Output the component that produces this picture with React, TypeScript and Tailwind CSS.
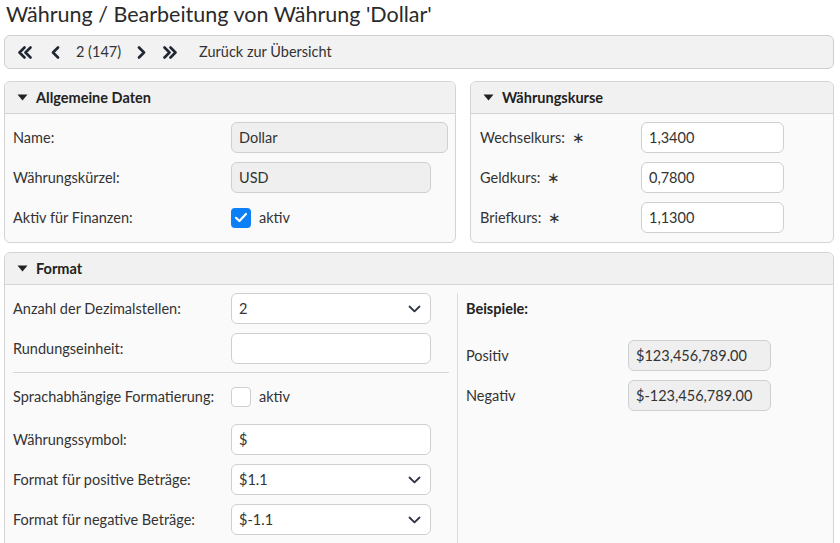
import React from "react";

const font = { fontFamily: "Lato, 'Noto Sans', sans-serif" };

function Caret() {
  return (
    <svg width="11" height="7" viewBox="0 0 11 7" className="shrink-0">
      <path d="M0.5 0.5 L10.5 0.5 L5.5 6.5 Z" fill="#222" />
    </svg>
  );
}

function Chevron({ dir }: { dir: "l" | "r" }) {
  return (
    <svg width="9" height="13" viewBox="0 0 9 13">
      <path
        d={dir === "l" ? "M7 1.5 L2 6.5 L7 11.5" : "M2 1.5 L7 6.5 L2 11.5"}
        stroke="#1f2733"
        strokeWidth="2.6"
        fill="none"
        strokeLinecap="round"
        strokeLinejoin="round"
      />
    </svg>
  );
}

function DoubleChevron({ dir }: { dir: "l" | "r" }) {
  return (
    <svg width="16" height="13" viewBox="0 0 16 13">
      <path
        d={
          dir === "l"
            ? "M7.5 1.5 L2.5 6.5 L7.5 11.5 M13.5 1.5 L8.5 6.5 L13.5 11.5"
            : "M2.5 1.5 L7.5 6.5 L2.5 11.5 M8.5 1.5 L13.5 6.5 L8.5 11.5"
        }
        stroke="#1f2733"
        strokeWidth="2.6"
        fill="none"
        strokeLinecap="round"
        strokeLinejoin="round"
      />
    </svg>
  );
}

function SelectChevron() {
  return (
    <svg width="13" height="8" viewBox="0 0 13 8">
      <path d="M1.5 1.5 L6.5 6.3 L11.5 1.5" stroke="#2a3340" strokeWidth="1.8" fill="none" strokeLinecap="round" strokeLinejoin="round" />
    </svg>
  );
}

function Field({ value, w, ro, select }: { value: string; w: string; ro?: boolean; select?: boolean }) {
  return (
    <div
      className={`${w} h-[31px] shrink-0 rounded-[6px] border border-[#cfcfcf] flex items-center justify-between pl-[7px] pr-[9px] text-[14.5px] text-[#333] ${
        ro ? "bg-[#efefef]" : "bg-white"
      }`}
    >
      <span>{value}</span>
      {select && <SelectChevron />}
    </div>
  );
}

function Check({ checked }: { checked?: boolean }) {
  return checked ? (
    <div className="w-[20px] h-[20px] rounded-[4px] bg-[#0b7ff5] flex items-center justify-center">
      <svg width="14" height="11" viewBox="0 0 14 11">
        <path d="M2 5.8 L5.4 9 L12 2" stroke="white" strokeWidth="2.2" fill="none" strokeLinecap="round" strokeLinejoin="round" />
      </svg>
    </div>
  ) : (
    <div className="w-[20px] h-[20px] rounded-[4px] bg-white border border-[#cfcfcf]" />
  );
}

function PanelHeader({ title }: { title: string }) {
  return (
    <div className="h-[32px] bg-[#f1f1f1] border-b border-[#d4d4d4] flex items-center gap-[8px] pl-[12px] rounded-t-[6px]">
      <Caret />
      <span className="font-bold text-[14.5px] text-[#222]">{title}</span>
    </div>
  );
}

function Row({ label, children, lw }: { label: React.ReactNode; children: React.ReactNode; lw: string }) {
  return (
    <div className="flex items-center h-[31px]">
      <div className={`${lw} shrink-0 text-[14.5px] text-[#333]`}>{label}</div>
      {children}
    </div>
  );
}

function Req({ text }: { text: string }) {
  return (
    <span>
      {text}
      <span className="ml-[7px]">∗</span>
    </span>
  );
}

export default function App() {
  return (
    <div style={font} className="w-[840px] h-[543px] overflow-hidden bg-white text-[#333]">
      <div className="h-[29px] pl-[6px] text-[21.5px] leading-[28px] text-[#2a2a2a]">
        Währung / Bearbeitung von Währung 'Dollar'
      </div>
      <div className="mx-[4px] mt-[6px] w-[830px] h-[34px] rounded-[6px] border border-[#cfcfcf] bg-[#f2f2f2] flex items-center pl-[12px] text-[14.5px]">
        <DoubleChevron dir="l" />
        <div className="w-[18px]" />
        <Chevron dir="l" />
        <span className="ml-[16px]">2 (147)</span>
        <div className="w-[16px]" />
        <Chevron dir="r" />
        <div className="w-[16px]" />
        <DoubleChevron dir="r" />
        <span className="ml-[21px]">Zurück zur Übersicht</span>
      </div>

      <div className="flex gap-[14px] mx-[4px] mt-[12px]">
        <div className="w-[452px] h-[162px] rounded-[6px] border border-[#d4d4d4] bg-[#fafafa]">
          <PanelHeader title="Allgemeine Daten" />
          <div className="pl-[8px] pt-[8px] flex flex-col gap-[9px]">
            <Row label="Name:" lw="w-[218px]">
              <Field value="Dollar" w="w-[217px]" ro />
            </Row>
            <Row label="Währungskürzel:" lw="w-[218px]">
              <Field value="USD" w="w-[200px]" ro />
            </Row>
            <Row label="Aktiv für Finanzen:" lw="w-[218px]">
              <div className="flex items-center gap-[8px] text-[14.5px]">
                <Check checked />
                <span>aktiv</span>
              </div>
            </Row>
          </div>
        </div>
        <div className="w-[364px] h-[162px] rounded-[6px] border border-[#d4d4d4] bg-[#fafafa]">
          <PanelHeader title="Währungskurse" />
          <div className="pl-[9px] pt-[8px] flex flex-col gap-[9px]">
            <Row label={<Req text="Wechselkurs:" />} lw="w-[161px]">
              <Field value="1,3400" w="w-[143px]" />
            </Row>
            <Row label={<Req text="Geldkurs:" />} lw="w-[161px]">
              <Field value="0,7800" w="w-[143px]" />
            </Row>
            <Row label={<Req text="Briefkurs:" />} lw="w-[161px]">
              <Field value="1,1300" w="w-[143px]" />
            </Row>
          </div>
        </div>
      </div>

      <div className="mx-[4px] mt-[9px] w-[830px] h-[320px] rounded-[6px] border border-[#d4d4d4] bg-[#fafafa]">
        <PanelHeader title="Format" />
        <div className="flex">
          <div className="w-[452px] pl-[8px] pt-[8px] pr-[8px] flex flex-col">
            <Row label="Anzahl der Dezimalstellen:" lw="w-[218px]">
              <Field value="2" w="w-[200px]" select />
            </Row>
            <div className="mt-[9px]">
              <Row label="Rundungseinheit:" lw="w-[218px]">
                <Field value="" w="w-[200px]" />
              </Row>
            </div>
            <div className="mt-[8px] h-px bg-[#d6d6d6] w-[436px]" />
            <div className="mt-[8px]">
              <Row label="Sprachabhängige Formatierung:" lw="w-[218px]">
                <div className="flex items-center gap-[8px] text-[14.5px]">
                  <Check />
                  <span>aktiv</span>
                </div>
              </Row>
            </div>
            <div className="mt-[12px] flex flex-col gap-[9px]">
              <Row label="Währungssymbol:" lw="w-[218px]">
                <Field value="$" w="w-[200px]" />
              </Row>
              <Row label="Format für positive Beträge:" lw="w-[218px]">
                <Field value="$1.1" w="w-[200px]" select />
              </Row>
              <Row label="Format für negative Beträge:" lw="w-[218px]">
                <Field value="$-1.1" w="w-[200px]" select />
              </Row>
            </div>
          </div>
          <div className="mt-[8px] w-px h-[300px] bg-[#dcdcdc]" />
          <div className="pl-[8px] pt-[8px] flex flex-col">
            <div className="h-[31px] flex items-center font-bold text-[14.5px] text-[#222]">Beispiele:</div>
            <div className="mt-[16px] flex flex-col gap-[9px]">
              <Row label="Positiv" lw="w-[162px]">
                <Field value="$123,456,789.00" w="w-[143px]" ro />
              </Row>
              <Row label="Negativ" lw="w-[162px]">
                <Field value="$-123,456,789.00" w="w-[143px]" ro />
              </Row>
            </div>
          </div>
        </div>
      </div>
    </div>
  );
}
